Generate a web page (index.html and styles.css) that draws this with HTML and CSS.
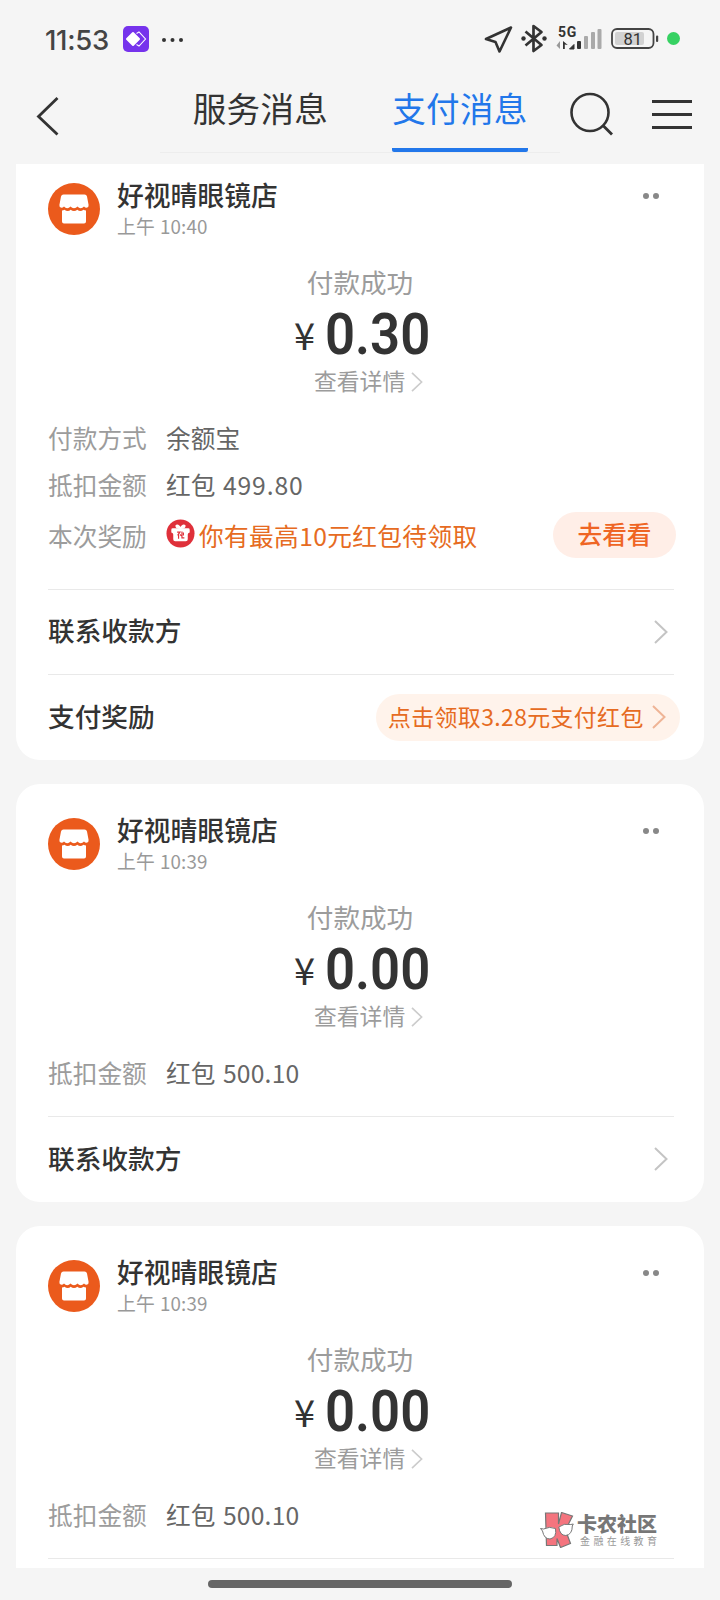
FILE: index.html
```html
<!DOCTYPE html>
<html lang="zh-CN">
<head>
<meta charset="utf-8">
<title>支付消息</title>
<link rel="stylesheet" href="styles.css">
</head>
<body>
<svg class="defs" width="0" height="0" aria-hidden="true">
  <symbol id="shop" viewBox="0 0 52 52">
    <circle cx="26" cy="26" r="26" fill="#eb5a1c"/>
    <path d="M15.500 11.500h21q2 0 2.500 2l1.600 8.500q.3 2.500-2 2.800q-1.600 0-2.600-1.200q-1.500 1.700-3.300 1.700t-3.200-1.700q-1.500 1.700-3.500 1.700t-3.500-1.700q-1.500 1.700-3.300 1.700t-3.200-1.700q-1 1.200-2.600 1.200q-2.300-.3-2-2.800l1.600-8.500q.5-2 2.500-2z" fill="#fff"/>
    <path d="M14 27.600q1.500 0 2.500-.8q1.500 1.200 3.200 1.200t3-1.200q1.500 1.200 3.300 1.200t3.300-1.200q1.500 1.200 3 1.200t3.200-1.200q1 .8 2.500.8v10.900q0 2-2 2h-20q-2 0-2-2z" fill="#fff"/>
  </symbol>
  <symbol id="chevron" viewBox="0 0 14 24"><path d="M1 1l11.500 11L1 23" fill="none" stroke="currentColor" stroke-width="2"/></symbol>
</svg>

<header class="top">
  <div class="status">
    <span class="clock">11:53</span>
    <svg class="app" viewBox="0 0 26 26"><rect width="26" height="26" rx="5" fill="#7633ec"/><path d="M13.500 7.500l2.500-1.500l6.500 7l-6.500 7l-2.500-1.500" fill="none" stroke="#fff" stroke-width="1.100"/><path d="M10 7l6 6l-6 6l-6-6z" fill="#fff" stroke="#fff" stroke-width="2" stroke-linejoin="round"/></svg>
    <svg class="more" viewBox="0 0 24 6" fill="#333"><circle cx="3" cy="3" r="2"/><circle cx="11.500" cy="3" r="2"/><circle cx="20" cy="3" r="2"/></svg>
    <svg class="signals" viewBox="480 20 204 36">
      <path d="M486 39l25-11.500L499.500 51.500l-4-9.500z" fill="none" stroke="#333" stroke-width="2.600" stroke-linejoin="round"/>
      <path d="M525.500 31.500l16 13.500l-8 6V26l8 6l-16 13.500" fill="none" stroke="#333" stroke-width="2.700" stroke-linejoin="round"/>
      <circle cx="523.500" cy="38.500" r="2.200" fill="#333"/><circle cx="544.500" cy="38.500" r="2.200" fill="#333"/>
      <text class="net" x="558" y="37">5G</text>
      <path d="M560 41v8l-3.500-3.500" fill="#999"/><path d="M563 41v8h1.800v-4.500l3 .5z" fill="#333"/>
      <path d="M569.500 49l4.500-4.500V49z" fill="#333" stroke="#333"/><rect x="577" y="41" width="4" height="8" rx="1" fill="#333"/>
      <g fill="#aaa"><rect x="584" y="36" width="4" height="13" rx="1"/><rect x="591" y="32" width="4" height="17" rx="1"/><rect x="597.500" y="29" width="4" height="20" rx="1"/></g>
      <rect x="612" y="29" width="41.500" height="19" rx="5" fill="none" stroke="#444" stroke-width="1.800"/>
      <rect x="615" y="32" width="29" height="13" rx="2" fill="#d2d2d2"/>
      <rect x="656" y="35.500" width="2.200" height="6.500" rx="1" fill="#444"/>
      <text class="charge" x="623.500" y="45">81</text>
      <circle cx="673.500" cy="38.500" r="6.500" fill="#36d162"/>
    </svg>
  </div>
  <nav class="nav">
    <svg class="back" viewBox="0 0 24 40"><path d="M21.500 2L2.500 20.500l19 18" fill="none" stroke="#333" stroke-width="2.800"/></svg>
    <div class="tabs"><a class="tab"><span>服务消息</span></a><a class="tab tab-on"><span>支付消息</span></a></div>
    <svg class="search" viewBox="0 0 44 46"><circle cx="20" cy="20.500" r="18.500" fill="none" stroke="#333" stroke-width="2.600"/><path d="M32.500 33l9.500 9.500" stroke="#333" stroke-width="2.800"/></svg>
    <svg class="menu" viewBox="0 0 40 30"><path d="M0 1.500h40M0 14.500h40M0 27.500h40" stroke="#333" stroke-width="2.800"/></svg>
  </nav>
</header>

<main class="feed">
  <article class="card card-first">
    <div class="head"><svg class="avatar"><use href="#shop"/></svg><div class="who"><h2 class="name">好视晴眼镜店</h2><p class="time">上午 10:40</p></div><div class="dots"><i></i><i></i></div></div>
    <p class="state">付款成功</p>
    <p class="amount"><span class="yen">¥</span><span class="num">0.30</span></p>
    <p class="detail">查看详情<svg class="chev-s"><use href="#chevron"/></svg></p>
    <div class="rows">
      <div class="row"><span class="key">付款方式</span><span class="val">余额宝</span></div>
      <div class="row"><span class="key">抵扣金额</span><span class="val">红包 <span class="sum">499.80</span></span></div>
      <div class="row row-prize"><span class="key">本次奖励</span>
        <svg class="gift" viewBox="0 0 30 30"><circle cx="15" cy="15" r="14.500" fill="#df303a"/><path d="M7 9.500h16q1.500 0 1.500 1.500v3q-2 .5-2 2v5q0 2-2 2h-11q-2 0-2-2v-5q0-1.500-2-2v-3q0-1.500 1.500-1.500z" fill="#fff"/><path d="M15 9.500q-5 0-4.500-2.500q1.500-2 4.500 2.500q3-4.500 4.500-2.500q.5 2.500-4.500 2.500z" fill="#fff" stroke="#fff" stroke-width="1.500"/><path d="M11.500 13.500h3l-2.500 3.500M13 15v5.500M16.500 13v6.500h2.500M14.500 16l1.500 1.500M18 14v3" fill="none" stroke="#df303a" stroke-width="1.200"/></svg>
        <span class="prize">你有最高10元红包待领取</span><a class="go">去看看</a></div>
    </div>
    <div class="link"><span class="label">联系收款方</span><svg class="chev"><use href="#chevron"/></svg></div>
    <div class="link"><span class="label">支付奖励</span><a class="bonus"><span>点击领取3.28元支付红包</span><svg class="chev-b"><use href="#chevron"/></svg></a></div>
  </article>

  <article class="card">
    <div class="head"><svg class="avatar"><use href="#shop"/></svg><div class="who"><h2 class="name">好视晴眼镜店</h2><p class="time">上午 10:39</p></div><div class="dots"><i></i><i></i></div></div>
    <p class="state">付款成功</p>
    <p class="amount"><span class="yen">¥</span><span class="num">0.00</span></p>
    <p class="detail">查看详情<svg class="chev-s"><use href="#chevron"/></svg></p>
    <div class="rows"><div class="row"><span class="key">抵扣金额</span><span class="val">红包 <span class="sum sum-tight">500.10</span></span></div></div>
    <div class="link"><span class="label">联系收款方</span><svg class="chev"><use href="#chevron"/></svg></div>
  </article>

  <article class="card">
    <div class="head"><svg class="avatar"><use href="#shop"/></svg><div class="who"><h2 class="name">好视晴眼镜店</h2><p class="time">上午 10:39</p></div><div class="dots"><i></i><i></i></div></div>
    <p class="state">付款成功</p>
    <p class="amount"><span class="yen">¥</span><span class="num">0.00</span></p>
    <p class="detail">查看详情<svg class="chev-s"><use href="#chevron"/></svg></p>
    <div class="rows"><div class="row"><span class="key">抵扣金额</span><span class="val">红包 <span class="sum sum-tight">500.10</span></span></div></div>
    <div class="link"></div>
  </article>
</main>

<footer class="home"><div class="pill"></div></footer>

<aside class="mark">
  <svg class="mark-logo" viewBox="0 0 34 36"><g fill="#f4747e" stroke="#777" stroke-width="1.200"><path d="M5.500 1h13v11l3-11.500l11 3.500l-7 14l5 13.500l-10 4l-3.500-9v7H6.500z"/></g><g fill="#fff" stroke="#777" stroke-width="1"><path d="M.5 16.500l3 .5q6-3 12-.5q1.500 9-5.500 10.500q-6 0-7.500-8z"/><path d="M18.800 15q5-4 12-2.500l2.500-.5l-1 2q0 8.500-6.500 9.500q-6 0-7-8.500z"/></g></svg>
  <div><p class="mark-name">卡农社区</p><p class="mark-sub">金融在线教育</p></div>
</aside>
</body>
</html>
```
FILE: styles.css
```css
* { box-sizing: border-box; margin: 0; padding: 0; }
body {
  position: relative;
  width: 720px;
  height: 1600px;
  overflow: hidden;
  background: #f5f5f5;
  color: #333;
  font-family: "Noto Sans CJK SC", sans-serif;
  display: flex;
  flex-direction: column;
}
svg { display: block; flex: none; }
.defs { position: absolute; }

.top { height: 164px; flex: none; }
.status { height: 76px; display: flex; align-items: center; padding: 0 36px 0 45px; }
.clock { width: 78px; font: 500 27.500px/40px Inter, sans-serif; letter-spacing: -.3px; color: #444; padding-top: 3px; white-space: nowrap; }
.app { width: 26px; height: 26px; margin-top: 2px; }
.more { width: 24px; height: 6px; margin: 3px auto 0 12px; }
.signals { width: 204px; height: 36px; }
.net { font: 700 14px Roboto, sans-serif; fill: #333; letter-spacing: .7px; }
.charge { font: 400 16.500px Roboto, sans-serif; fill: #333; }

.nav { height: 77px; display: flex; }
.back { width: 24px; height: 40px; margin: 20px 0 0 36px; }
.tabs { width: 400px; height: 77px; margin-left: 100px; border-bottom: 1px solid #ededed; display: flex; }
.tab { width: 200px; display: flex; justify-content: center; font-size: 33.600px; line-height: 63px; letter-spacing: .3px; }
.tab span { height: 76px; white-space: nowrap; padding-left: 1px; }
.tab-on { color: #2277ea; }
.tab-on span { width: 136px; text-align: center; border-bottom: 4px solid #2277ea; border-radius: 2px; padding-left: 0; }
.search { width: 44px; height: 46px; margin: 16px 0 0 10px; }
.menu { width: 40px; height: 30px; margin: 24px 0 0 38px; }

.feed { height: 1404px; flex: none; overflow: hidden; padding: 0 16px; }
.card { background: #fff; border-radius: 24px; padding: 28px 30px 0 32px; margin-bottom: 24px; }
.card-first { margin-top: -15px; border-radius: 0 0 24px 24px; }
.head { display: flex; height: 64px; }
.avatar { width: 52px; height: 52px; margin: 6px 17px 0 0; }
.who { padding-top: 2px; }
.name { font-size: 26.800px; line-height: 32px; font-weight: 500; }
.time { font-size: 18.800px; line-height: 29px; color: #999; letter-spacing: .1px; word-spacing: 1px; }
.dots { display: flex; gap: 4px; margin: 16px 15px 0 auto; }
.dots i { width: 6px; height: 6px; border-radius: 50%; background: #888; }
.state { margin-top: 23px; font-size: 26.600px; line-height: 36px; color: #9c9c9c; text-align: center; padding-right: 2px; }
.amount { margin-top: 3px; height: 61px; display: flex; padding-left: 246px; }
.yen { width: 31px; font-size: 38px; line-height: 62px; font-weight: 400; }
.num { font: 600 57px/63px Roboto, sans-serif; transform: scaleX(.925); transform-origin: 0 50%; white-space: nowrap; }
.detail { display: flex; align-items: center; font-size: 22.800px; line-height: 34px; color: #9c9c9c; padding-left: 266px; white-space: nowrap; }
.chev-s { width: 12px; height: 20px; margin: 1px 0 0 6px; color: #ccc; }
.rows { margin-top: 15px; padding-bottom: 21px; }
.card-first .rows { padding-bottom: 27px; }
.row { display: flex; align-items: center; height: 47px; font-size: 24.700px; white-space: nowrap; }
.row-prize { height: 55px; margin-right: -2px; }
.key { width: 118px; color: #9c9c9c; }
.sum { margin-left: 2px; letter-spacing: .9px; }
.val { color: #666; }
.sum-tight { letter-spacing: .2px; }
.gift { width: 29px; height: 29px; margin: -2px 4px 0 0; }
.prize { color: #e66b22; letter-spacing: .35px; }
.go { width: 123px; height: 46px; margin: 1px 0 0 auto; border-radius: 23px; background: #ffeee7; color: #ef6524; text-align: center; line-height: 43px; font-weight: 500; }
.link { height: 86px; border-top: 1px solid #e9e9e9; display: flex; align-items: center; justify-content: space-between; padding-right: 6px; }
.rows + .link:not(:last-child) { height: 85px; }
.label { font-size: 26.700px; font-weight: 500; line-height: 40px; margin-top: -4px; }
.chev { width: 14px; height: 24px; margin-top: -1px; color: #c4c4c4; }
.bonus { width: 304px; height: 47px; border-radius: 24px; background: #fff3eb; color: #e66b22; display: flex; align-items: center; font-size: 22.900px; line-height: 44px; padding: 0 12px; margin-right: -12px; white-space: nowrap; letter-spacing: .4px; }
.bonus span { margin-top: -3px; }
.chev-b { width: 14px; height: 24px; margin: -2px 2px 0 auto; color: #efb496; }

.home { flex: 1; padding: 12px 0 0 208px; }
.pill { width: 304px; height: 8px; border-radius: 4px; background: #666; }

.mark { position: absolute; left: 540px; top: 1512px; display: flex; gap: 3px; }
.mark-logo { width: 34px; height: 36px; }
.mark-name { font-size: 20px; line-height: 23px; font-weight: 900; color: #777; white-space: nowrap; }
.mark-sub { font-size: 10px; line-height: 12px; letter-spacing: 3.400px; color: #999; white-space: nowrap; padding-left: 3px; }
```
